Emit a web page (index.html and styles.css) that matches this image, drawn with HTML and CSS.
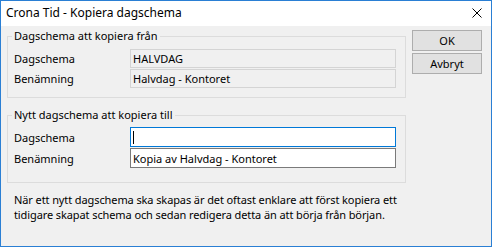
FILE: index.html
```html
<!DOCTYPE html>
<html lang="sv">
<head>
<meta charset="utf-8">
<title>Crona Tid - Kopiera dagschema</title>
<link rel="stylesheet" href="styles.css">
</head>
<body>
<div class="window">
  <div class="titlebar">
    <span class="title">Crona Tid - Kopiera dagschema</span>
    <span class="close" aria-label="Stäng">
      <svg width="10" height="10" viewBox="0 0 10 10"><path d="M0.5 0.5 L9.5 9.5 M9.5 0.5 L0.5 9.5" stroke="#000" stroke-width="1" fill="none"/></svg>
    </span>
  </div>
  <div class="client">
    <div class="main">
      <fieldset class="group group-from">
        <legend>Dagschema att kopiera från</legend>
        <div class="row">
          <span class="label">Dagschema</span>
          <div class="box readonly">HALVDAG</div>
        </div>
        <div class="row">
          <span class="label">Benämning</span>
          <div class="box readonly">Halvdag - Kontoret</div>
        </div>
      </fieldset>
      <fieldset class="group group-to">
        <legend>Nytt dagschema att kopiera till</legend>
        <div class="row">
          <span class="label">Dagschema</span>
          <div class="box edit focused"><span class="caret"></span></div>
        </div>
        <div class="row">
          <span class="label">Benämning</span>
          <div class="box edit">Kopia av Halvdag - Kontoret</div>
        </div>
      </fieldset>
      <p class="note">När ett nytt dagschema ska skapas är det oftast enklare att först kopiera ett<br>tidigare skapat schema och sedan redigera detta än att börja från början.</p>
    </div>
    <div class="buttons">
      <div class="btn">OK</div>
      <div class="btn">Avbryt</div>
    </div>
  </div>
</div>
</body>
</html>
```

FILE: styles.css
```css
html, body {
  margin: 0;
  padding: 0;
  background: #ffffff;
}
body {
  font-family: "Noto Sans", "Open Sans", "Liberation Sans", sans-serif;
  font-size: 11px;
  color: #000;
}
.window {
  width: 492px;
  height: 247px;
  box-sizing: border-box;
  border: 1px solid #2a7fd4;
  display: flex;
  flex-direction: column;
  background: #f0f0f0;
}
.titlebar {
  height: 25px;
  background: #ffffff;
  display: flex;
  align-items: center;
  justify-content: space-between;
  padding: 0 9px 1px 5px;
  box-sizing: border-box;
  flex: none;
}
.title {
  font-size: 12px;
  line-height: 16px;
}
.close {
  display: flex;
  width: 10px;
  height: 10px;
}
.client {
  display: flex;
  flex: 1;
  padding: 0 9px 0 6px;
  gap: 6px;
}
.main {
  width: 399px;
  display: flex;
  flex-direction: column;
}
.group {
  margin: 0;
  border: 1px solid #dcdcdc;
  padding: 0 9px 0 4px;
  min-width: 0;
}
.group legend {
  padding: 0 2px;
  line-height: 16px;
  margin-left: 0;
}
.group-from {
  margin-top: 2px;
  padding-top: 5px;
  padding-bottom: 9px;
}
.group-to {
  margin-top: 9px;
  padding-top: 4px;
  padding-bottom: 14px;
}
.row {
  display: flex;
  align-items: center;
  margin-bottom: 1px;
}
.row:last-child {
  margin-bottom: 0;
}
.label {
  width: 116px;
  padding-left: 2px;
  flex: none;
}
.box {
  flex: 1;
  height: 19px;
  box-sizing: border-box;
  padding: 0 2px;
  display: flex;
  align-items: center;
  white-space: nowrap;
}
.readonly {
  border: 1px solid #d4d4d4;
  background: #f0f0f0;
}
.edit {
  height: 20px;
  border: 1px solid #7a7a7a;
  background: #ffffff;
}
.focused {
  border-color: #0078d7;
}
.caret {
  width: 1px;
  height: 13px;
  background: #000;
  margin-left: 0;
}
.note {
  margin: 9px 0 0 7px;
  line-height: 15px;
  letter-spacing: -0.1px;
}
.buttons {
  display: flex;
  flex-direction: column;
  gap: 2px;
  padding-top: 4px;
}
.btn {
  width: 70px;
  height: 21px;
  box-sizing: border-box;
  border: 1px solid #adadad;
  background: #e1e1e1;
  display: flex;
  align-items: center;
  justify-content: center;
}
```
